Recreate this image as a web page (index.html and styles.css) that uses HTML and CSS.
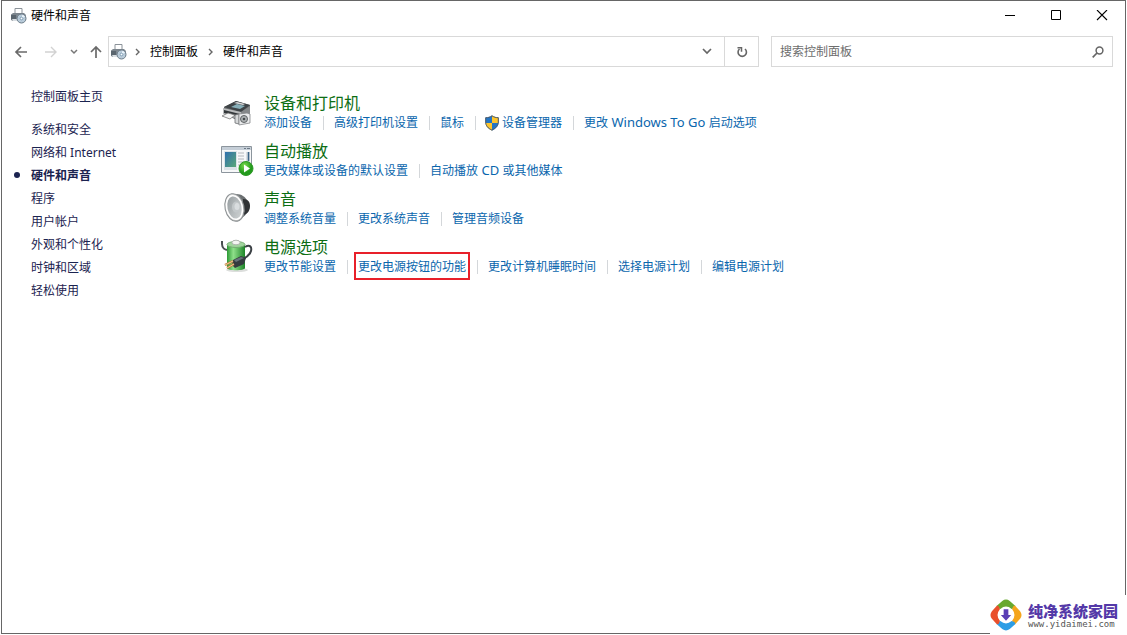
FILE: index.html
```html
<!DOCTYPE html>
<html lang="zh-CN">
<head>
<meta charset="utf-8">
<title>硬件和声音</title>
<link rel="stylesheet" href="styles.css">
</head>
<body>
<svg class="defs" aria-hidden="true">
  <defs>
    <linearGradient id="metal" x1="0" y1="0" x2="1" y2="1"><stop offset="0" stop-color="#f4f4f4"/><stop offset="1" stop-color="#a8a8a8"/></linearGradient>
    <linearGradient id="screen" x1="0" y1="0" x2="1" y2="1"><stop offset="0" stop-color="#2f6fae"/><stop offset="1" stop-color="#5aa878"/></linearGradient>
    <linearGradient id="cell" x1="0" y1="0" x2="1" y2="0"><stop offset="0" stop-color="#2c9a35"/><stop offset=".35" stop-color="#8fe08a"/><stop offset="1" stop-color="#1d8428"/></linearGradient>
    <linearGradient id="cone" x1="0" y1="0" x2="1" y2="1"><stop offset="0" stop-color="#8e9598"/><stop offset=".5" stop-color="#b5babc"/><stop offset="1" stop-color="#d4d8d9"/></linearGradient>
    <radialGradient id="play" cx=".4" cy=".3"><stop offset="0" stop-color="#7bdc4e"/><stop offset="1" stop-color="#239a1d"/></radialGradient>
    <symbol id="device" viewBox="0 0 17 17">
      <path d="M5 7V1.500h7V7" fill="#fff" stroke="#8b9299"/>
      <path d="M1 7.500 3 6h11l2 2v5l-2 1H3l-2-1z" fill="#7c858d"/>
      <path d="M1 8h5v5H3l-2-1z" fill="#5a656e"/>
      <path d="M2 12h6v2H3z" fill="#d9dee2"/>
      <circle cx="11.500" cy="11.500" r="4.500" fill="#b9cbd9" stroke="#6c7c89"/>
      <path d="m11.500 11.500 1-4 2.500 2z" fill="#eaf4fb"/>
      <circle cx="11.500" cy="11.500" r="1.300" fill="#fff" stroke="#6287a5" stroke-width=".7"/>
    </symbol>
  </defs>
</svg>
<div class="window">
  <header class="titlebar">
    <svg class="icon-device" aria-hidden="true"><use href="#device"/></svg>
    <h1 class="title">硬件和声音</h1>
    <div class="controls">
      <button class="control" aria-label="最小化"><svg width="12" height="12" viewBox="0 0 12 12"><path d="M1 5.500h10" stroke="#000"/></svg></button>
      <button class="control" aria-label="最大化"><svg width="12" height="12" viewBox="0 0 12 12"><path d="M1.500.5h9v9h-9z" fill="none" stroke="#000"/></svg></button>
      <button class="control" aria-label="关闭"><svg width="12" height="12" viewBox="0 0 12 12"><path d="m1 0 10 10M11 0 1 10" stroke="#000" stroke-width="1.100"/></svg></button>
    </div>
  </header>
  <div class="toolbar">
    <nav class="history" aria-label="导航">
      <button class="nav-button" aria-label="后退"><svg width="14" height="12" viewBox="0 0 14 12"><path d="M13 6H2m5-5L2 6l5 5" fill="none" stroke="#6a6a6a" stroke-width="1.700"/></svg></button>
      <button class="nav-button" aria-label="前进" disabled><svg width="14" height="12" viewBox="0 0 14 12"><path d="M1 6h11M7 1l5 5-5 5" fill="none" stroke="#d2d2d2" stroke-width="1.400"/></svg></button>
      <button class="nav-button" aria-label="最近位置"><svg width="8" height="6" viewBox="0 0 8 6"><path d="m1 1 3 3 3-3" fill="none" stroke="#777" stroke-width="1.500"/></svg></button>
      <button class="nav-button" aria-label="上移"><svg width="12" height="14" viewBox="0 0 12 14"><path d="M6 13V2M1 7l5-5 5 5" fill="none" stroke="#6a6a6a" stroke-width="1.700"/></svg></button>
    </nav>
    <div class="address">
      <div class="crumbs">
        <svg class="icon-device" aria-hidden="true"><use href="#device"/></svg>
        <svg class="chevron" viewBox="0 0 5 8"><path d="m1 1 3 3-3 3" fill="none" stroke="#666" stroke-width="1.400"/></svg>
        <a class="crumb" href="#">控制面板</a>
        <svg class="chevron" viewBox="0 0 5 8"><path d="m1 1 3 3-3 3" fill="none" stroke="#666" stroke-width="1.400"/></svg>
        <a class="crumb" href="#">硬件和声音</a>
      </div>
      <button class="address-button" aria-label="以前的位置"><svg width="10" height="7" viewBox="0 0 10 7"><path d="m1 1 4 4 4-4" fill="none" stroke="#666" stroke-width="1.700"/></svg></button>
      <button class="address-button refresh" aria-label="刷新"><svg width="12" height="12" viewBox="0 0 12 12"><path d="M3.500 3a4.200 4.200 0 1 0 5.500 0" fill="none" stroke="#666" stroke-width="1.600"/><path d="M1.500 1.700h4v4" fill="none" stroke="#666" stroke-width="1.500"/></svg></button>
    </div>
    <label class="search">
      <input class="search-input" type="text" placeholder="搜索控制面板" aria-label="搜索控制面板">
      <svg width="12" height="12" viewBox="0 0 12 12"><circle cx="7.500" cy="4.500" r="3.400" fill="none" stroke="#666" stroke-width="1.500"/><path d="m5 7-4.300 4.300" stroke="#666" stroke-width="1.700"/></svg>
    </label>
  </div>
  <div class="content">
    <nav class="sidebar" aria-label="类别">
      <a class="side-link home" href="#">控制面板主页</a>
      <a class="side-link" href="#">系统和安全</a>
      <a class="side-link" href="#">网络和 Internet</a>
      <a class="side-link current" href="#" aria-current="page">硬件和声音</a>
      <a class="side-link" href="#">程序</a>
      <a class="side-link" href="#">用户帐户</a>
      <a class="side-link" href="#">外观和个性化</a>
      <a class="side-link" href="#">时钟和区域</a>
      <a class="side-link" href="#">轻松使用</a>
    </nav>
    <main class="groups">
      <section class="group">
        <svg class="group-icon" viewBox="0 0 34 34">
          <path d="M4 12 16 6l14 4v11l-9 6L4 19z" fill="#66696c"/>
          <path d="m4 12 12-6 14 4-9 7z" fill="#3f4447"/>
          <path d="m11 12 6-3 8 2-5 3z" fill="#86aeb8"/>
          <path d="m14 8 3-1 8 2-2 1z" fill="#d8dadb"/>
          <path d="m3 13 18 4v8L3 19z" fill="#b9bbbc"/>
          <path d="m4 15 16 4v3L4 18z" fill="#33373a"/>
          <path d="m21 17 9-6v11l-9 5z" fill="#85888a"/>
          <path d="m2 21 6-3 7 2-5 4z" fill="#f5f5f5" stroke="#777" stroke-width=".8"/>
          <path d="m15 20 4-1v10l-4-1z" fill="#d6d8d9" stroke="#6d7072" stroke-width=".8"/>
          <path d="m19 19 8-1 3 1v9l-11 2z" fill="#ebeced" stroke="#85888a" stroke-width=".8"/>
          <circle cx="24" cy="24" r="3.500" fill="#aeb2b4" stroke="#5f6365"/>
          <circle cx="24" cy="24" r="1.300" fill="#454a4c"/>
        </svg>
        <div class="group-body">
          <h2 class="group-title"><a href="#">设备和打印机</a></h2>
          <ul class="tasks">
            <li class="task"><a href="#">添加设备</a></li>
            <li class="task"><a href="#">高级打印机设置</a></li>
            <li class="task"><a href="#">鼠标</a></li>
            <li class="task"><a class="shielded" href="#"><svg width="14" height="16" viewBox="0 0 14 16"><path d="M7 .5c2 1.500 4 2 6.500 2V7c0 4-2.500 6.500-6.500 8.500C3 13.500.5 11 .5 7V2.500C3 2.500 5 2 7 .5z" fill="#2475c4"/><path d="M7 .5c2 1.500 4 2 6.500 2V8H7zM7 8v7.500C3 13.500.7 11.200.5 8z" fill="#fdc52c"/><path d="M7 .8c2 1.400 4 1.900 6.300 1.900V7c0 3.800-2.400 6.200-6.300 8.200C3.100 13.200.7 10.800.7 7V2.700C3 2.700 5 2.200 7 .8z" fill="none" stroke="#4d5a68"/></svg>设备管理器</a></li>
            <li class="task"><a href="#">更改<span class="latin"> Windows To Go </span>启动选项</a></li>
          </ul>
        </div>
      </section>
      <section class="group">
        <svg class="group-icon" viewBox="0 0 34 34">
          <path d="M1.500 3.500h30v26h-30z" fill="#f7f8f9" stroke="#8c959d"/>
          <path d="M2 4h29v3H2z" fill="#c5ced7"/>
          <path d="M24 5.500h2m1 0h3" stroke="#6c7986"/>
          <path d="M4 8h13v19H4z" fill="#dce3e8"/>
          <path d="M5 9h11v15H5z" fill="url(#screen)"/>
          <path d="M18 10h6m-6 3h6m-6 3h6m-6 3h6m-6 3h4" stroke="#b4b8bd"/>
          <path d="M26 9h4v11h-4z" fill="#d7dde2"/>
          <path d="M28.500 9v9" stroke="#3c6487" stroke-width="1.500"/>
          <circle cx="26" cy="25.500" r="7" fill="url(#play)" stroke="#2f9a27"/>
          <path d="m24 21.500 6 4-6 4z" fill="#fff"/>
        </svg>
        <div class="group-body">
          <h2 class="group-title"><a href="#">自动播放</a></h2>
          <ul class="tasks">
            <li class="task"><a href="#">更改媒体或设备的默认设置</a></li>
            <li class="task"><a href="#">自动播放<span class="latin"> CD </span>或其他媒体</a></li>
          </ul>
        </div>
      </section>
      <section class="group">
        <svg class="group-icon" viewBox="0 0 34 34">
          <path d="M16 3c6 0 9 3 11 6 3 4 3 10 0 13-3 4-6 6-10 6z" fill="#6b6f71"/>
          <path d="M23 8c5 0 7 3 7 7s-2 8-7 9z" fill="#303335"/>
          <ellipse cx="14.500" cy="16.500" rx="9.500" ry="14" transform="rotate(-12 14.500 16.500)" fill="url(#metal)" stroke="#8b9092"/>
          <ellipse cx="14.500" cy="16.500" rx="7.800" ry="12" transform="rotate(-12 14.500 16.500)" fill="url(#cone)" stroke="#fff" stroke-width="1.500"/>
          <ellipse cx="16" cy="16" rx="4" ry="5.500" fill="#c3c8ca"/>
          <ellipse cx="17" cy="15.500" rx="2.500" ry="3.500" fill="#d9dddf"/>
        </svg>
        <div class="group-body">
          <h2 class="group-title"><a href="#">声音</a></h2>
          <ul class="tasks">
            <li class="task"><a href="#">调整系统音量</a></li>
            <li class="task"><a href="#">更改系统声音</a></li>
            <li class="task"><a href="#">管理音频设备</a></li>
          </ul>
        </div>
      </section>
      <section class="group">
        <svg class="group-icon" viewBox="0 0 34 34">
          <path d="M2 2v3c0 4 3 6 6 6" fill="none" stroke="#4a4f52" stroke-width="2"/>
          <ellipse cx="17" cy="31" rx="11" ry="2" fill="#dcdedc"/>
          <path d="M7 6v23c0 3 18 3 18 0V6z" fill="url(#cell)"/>
          <ellipse cx="16" cy="5.500" rx="9" ry="3" fill="#9fd49c" stroke="#74ad72"/>
          <ellipse cx="16" cy="3.500" rx="4" ry="2.300" fill="#f4f5f3" stroke="#b0b7b0"/>
          <path d="M25 8c5-3 7 0 6 4-1 4-4 6-8 8" fill="none" stroke="#3b4145" stroke-width="2"/>
          <path d="m13 21 8-4 5 2-2 6-9 4-3-3z" fill="#343b3f"/>
          <path d="m14 21 7-3 3 1-8 4z" fill="#66727a"/>
          <path d="m13 22-8 4m9-1-7 4" stroke="#b9793a" stroke-width="2.400"/>
          <path d="m13 22-8 4m9-1-7 4" stroke="#f0cf98"/>
        </svg>
        <div class="group-body">
          <h2 class="group-title"><a href="#">电源选项</a></h2>
          <ul class="tasks">
            <li class="task"><a href="#">更改节能设置</a></li>
            <li class="task"><a class="marked" href="#">更改电源按钮的功能</a></li>
            <li class="task"><a href="#">更改计算机睡眠时间</a></li>
            <li class="task"><a href="#">选择电源计划</a></li>
            <li class="task"><a href="#">编辑电源计划</a></li>
          </ul>
        </div>
      </section>
    </main>
  </div>
</div>
<aside class="watermark">
  <svg width="32" height="32" viewBox="0 0 34 34">
    <path d="M7 7.500 13 2q4-3 8 0l6 5.500-1 2-3 1q-6-5-12 0l-3-1z" fill="#68a82f"/>
    <path d="M26.500 7 32 13q3 4 0 8l-5.500 6-2-1-1-3q5-6 0-12l1-3z" fill="#f5a51c"/>
    <path d="M27 26.500 21 32q-4 3-8 0l-6-5.500 1-2 3-1q6 5 12 0l3 1z" fill="#2d9de5"/>
    <path d="M7.500 27 2 21q-3-4 0-8l5.500-6 2 1 1 3q-5 6 0 12l-1 3z" fill="#e9502c"/>
    <circle cx="17" cy="17" r="8" fill="#fff"/>
    <path d="M14.500 11h5v6h3L17 23l-5.500-6h3z" fill="#5b3fb5"/>
  </svg>
  <div class="brand">
    <strong class="brand-name">纯净系统家园</strong>
    <span class="brand-url">www.yidaimei.com</span>
  </div>
</aside>
</body>
</html>
```

FILE: styles.css
```css
* { box-sizing: border-box; }

body {
  display: flex;
  flex-direction: column;
  min-height: 100vh;
  margin: 0;
  background: #fff;
  color: #000;
  font: 12px/16px "Noto Sans", "Noto Sans CJK SC", sans-serif;
}

h1, h2, ul { margin: 0; padding: 0; font-weight: 400; }
ul { list-style: none; }
a { color: inherit; text-decoration: none; }
svg { display: block; flex: none; }
button { border: 0; padding: 0; background: none; font: inherit; }
.defs { position: absolute; width: 0; height: 0; }

.window {
  flex: 1;
  margin: 0 1px 1px;
  border: 1px solid #666;
}

.titlebar { display: flex; align-items: center; height: 29px; padding-left: 8px; }
.icon-device { width: 17px; height: 17px; }
.title { flex: 1; margin-left: 4px; font-size: 12px; }
.controls { display: flex; }
.control { display: grid; place-items: center; width: 46px; height: 29px; }

.toolbar {
  display: grid;
  grid-template-columns: 94px minmax(0, 651fr) minmax(0, 342fr);
  height: 31px;
  margin: 6px 12px 0;
}
.history { display: flex; align-items: center; gap: 12px; }
.nav-button:nth-child(2) { margin-left: 4px; }
.address { display: flex; margin-right: 12px; border: 1px solid #d9d9d9; }
.toolbar { grid-template-columns: 94px minmax(0, 663fr) minmax(0, 342fr); }
.crumbs { display: flex; flex: 1; align-items: center; padding-left: 1px; }
.chevron { width: 5px; height: 8px; margin: 0 10px 0 8px; }
.crumb + .chevron { margin-left: 10px; }
.address-button { display: grid; place-items: center; width: 34px; }
.refresh { border-left: 1px solid #d9d9d9; }
.search {
  display: flex;
  align-items: center;
  padding: 0 8px;
  border: 1px solid #d9d9d9;
}
.search-input { flex: 1; min-width: 0; padding: 0; border: 0; outline: 0; background: none; font: inherit; }
.search-input::placeholder { color: #6d6d6d; opacity: 1; }

.content { display: flex; padding-top: 22px; }
.sidebar { display: flex; flex-direction: column; gap: 7px; width: 218px; padding-left: 29px; color: #1b2350; }
.home { margin-bottom: 10px; }
.current { position: relative; font-weight: 700; }
.current::before {
  content: "";
  position: absolute;
  top: 4px;
  left: -17px;
  width: 6px;
  height: 6px;
  border-radius: 50%;
  background: #1b2350;
}

.groups { display: flex; flex: 1; flex-direction: column; gap: 8px; padding-top: 4px; }
.group { display: flex; gap: 10px; min-height: 40px; }
.group-icon { width: 34px; height: 34px; margin-top: 2px; }
.group-title { padding-bottom: 2px; color: #0d6e14; font-size: 16px; line-height: 20px; }
.tasks { display: flex; flex-wrap: wrap; color: #0a66ad; }
.task { display: flex; }
.task + .task::before { content: ""; width: 1px; height: 14px; margin: 1px 10px 0 11px; background: #d4d7da; }
.latin { font-size: 13px; line-height: 1; white-space: pre; }
.shielded { display: flex; gap: 3px; margin-left: -1px; }
.marked { position: relative; }
.marked::after { content: ""; position: absolute; inset: -7px -4px -5px; border: 2px solid #e8202a; }

.watermark {
  position: absolute;
  right: 0;
  bottom: 0;
  display: flex;
  align-items: center;
  gap: 6px;
  height: 40px;
  padding: 0 9px 0 0;
  background: #fff;
}
.brand { display: flex; flex-direction: column; padding-top: 2px; color: #5439a8; }
.brand-name { font-size: 15px; font-weight: 900; line-height: 16px; }
.brand-url { color: #555; font: 9px/10px "DejaVu Sans Mono", monospace; }
```
